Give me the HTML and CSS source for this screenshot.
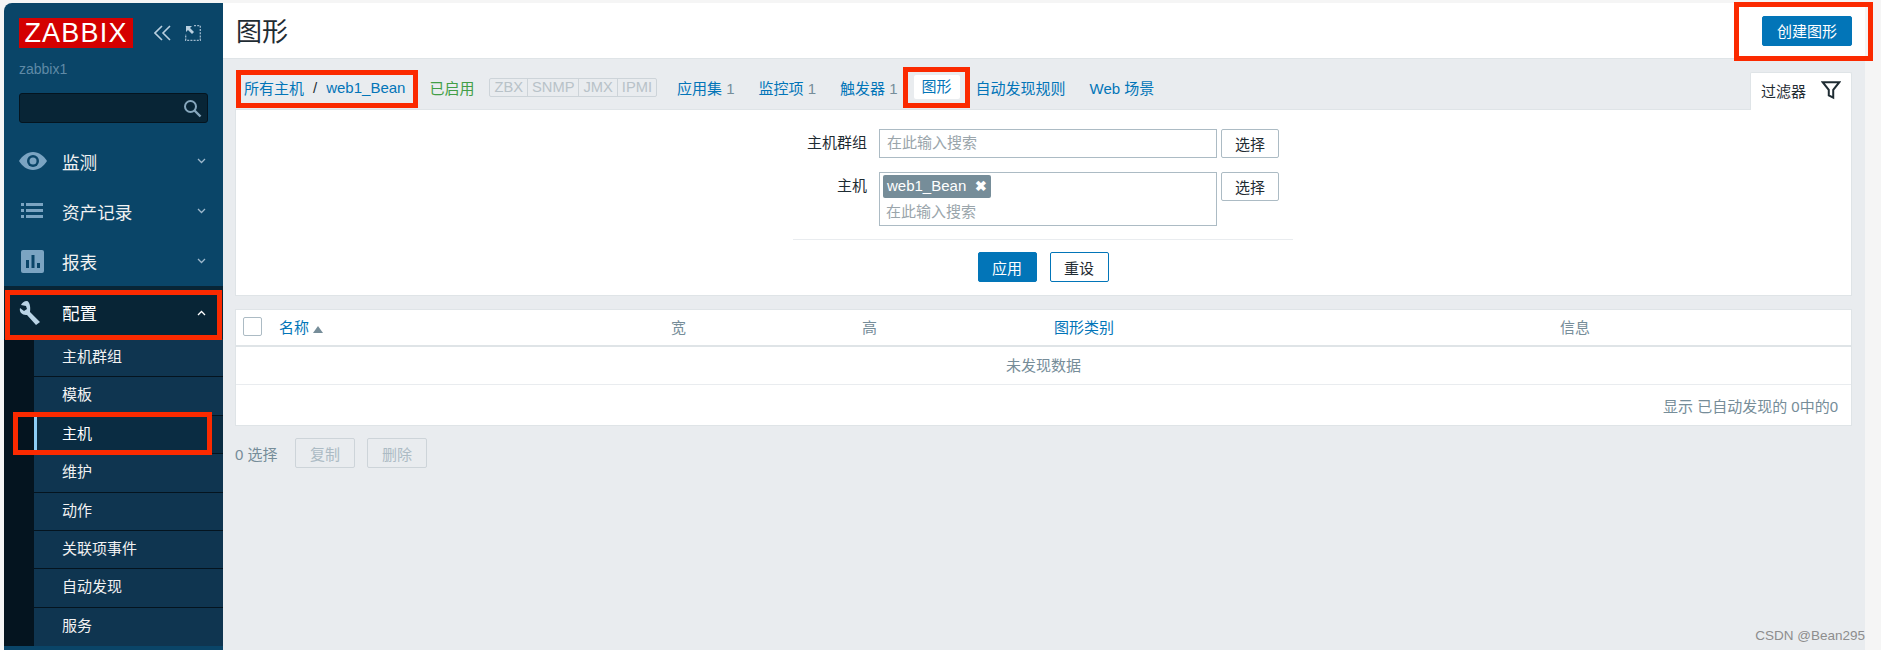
FILE: index.html
```html
<!DOCTYPE html>
<html lang="zh-CN">

<head>
  <meta charset="UTF-8" />
  <title>图形</title>
  <link rel="stylesheet" href="styles.css">
</head>

<body>
  <div class="page">

    <!-- left menu -->
    <aside class="sidebar">
      <div class="logo-row">
        <span class="logo">ZABBIX</span>
        <svg class="side-icon collapse-icon" width="18" height="16" viewBox="0 0 18 16">
          <path d="M8 1 1 8l7 7M16 1 9 8l7 7" fill="none" stroke="#b9cfdf" stroke-width="1.6" />
        </svg>
        <svg class="side-icon" width="16" height="16" viewBox="0 0 16 16">
          <path d="M9 .7h6.300V15.300H.7V9" fill="none" stroke="#9db8cc" stroke-width="1.300" stroke-dasharray="2 1.200" />
          <path d="M1 1h6L5 3l4 4-2 2-4-4-2 2z" fill="#b9cfdf" />
        </svg>
      </div>
      <div class="server-name">zabbix1</div>
      <div class="side-search">
        <svg width="19" height="19" viewBox="0 0 19 19">
          <circle cx="7.500" cy="7.500" r="5.500" fill="none" stroke="#86a7bd" stroke-width="2" />
          <path d="m11.500 11.500 6 6" stroke="#86a7bd" stroke-width="2.400" />
        </svg>
      </div>

      <nav class="menu">
        <a class="menu-item">
          <svg class="menu-icon" width="28" height="20" viewBox="0 0 28 20">
            <path d="M14 1C8 1 3 5 0 10c3 5 8 9 14 9s11-4 14-9c-3-5-8-9-14-9z" fill="#7ba4c2" />
            <circle cx="14" cy="10" r="6" fill="#0a4568" />
            <circle cx="14" cy="10" r="3.500" fill="#7ba4c2" />
          </svg>
          <span class="menu-text">监测</span>
          <svg class="chevron" width="9" height="6" viewBox="0 0 9 6"><path d="m1 1 3.500 3.500L8 1" fill="none" stroke="#9db8cc" stroke-width="1.300" /></svg>
        </a>
        <a class="menu-item">
          <svg class="menu-icon" width="28" height="16" viewBox="0 0 28 16">
            <path d="M2 0h3v3H2zM2 6h3v3H2zM2 12h3v3H2zM7 0h17v3H7zM7 6h17v3H7zM7 12h17v3H7z" fill="#7ba4c2" />
          </svg>
          <span class="menu-text">资产记录</span>
          <svg class="chevron" width="9" height="6" viewBox="0 0 9 6"><path d="m1 1 3.500 3.500L8 1" fill="none" stroke="#9db8cc" stroke-width="1.300" /></svg>
        </a>
        <a class="menu-item">
          <svg class="menu-icon" width="28" height="23" viewBox="0 0 28 23">
            <rect x="2" width="23" height="23" rx="2" fill="#7ba4c2" />
            <path d="M7 10h3v8H7zM12.500 5h3v13h-3zM18 13h3v5h-3z" fill="#0a4568" />
          </svg>
          <span class="menu-text">报表</span>
          <svg class="chevron" width="9" height="6" viewBox="0 0 9 6"><path d="m1 1 3.500 3.500L8 1" fill="none" stroke="#9db8cc" stroke-width="1.300" /></svg>
        </a>
        <a class="menu-item menu-open">
          <svg class="menu-icon" width="28" height="24" viewBox="0 0 28 24">
            <path d="M8 0c-3 0-5 2-6 4l5 1 1 3-3 2-4-3c-1 4 2 7 6 7h1l9 10 4-3-10-10c1-6-1-11-3-11z" fill="#b9d4e6" />
          </svg>
          <span class="menu-text">配置</span>
          <svg class="chevron" width="9" height="6" viewBox="0 0 9 6"><path d="m1 5 3.500-3.500L8 5" fill="none" stroke="#ffffff" stroke-width="1.300" /></svg>
        </a>
      </nav>

      <ul class="submenu">
        <li>主机群组</li>
        <li>模板</li>
        <li class="current">主机</li>
        <li>维护</li>
        <li>动作</li>
        <li>关联项事件</li>
        <li>自动发现</li>
        <li>服务</li>
      </ul>
    </aside>

    <main class="content">
      <header class="page-head">
        <h1>图形</h1>
        <button class="btn-primary btn-create">创建图形</button>
      </header>

      <div class="content-body">
        <section class="filter-panel">
          <div class="tabs-row">
            <a class="crumb">所有主机</a><span class="crumb-sep">/</span><a class="crumb">web1_Bean</a>
            <span class="status-on">已启用</span>
            <span class="avail"><i>ZBX</i><i>SNMP</i><i>JMX</i><i>IPMI</i></span>
            <a class="tab-link link-apps">应用集 <em>1</em></a>
            <a class="tab-link">监控项 <em>1</em></a>
            <a class="tab-link">触发器 <em>1</em></a>
            <a class="tab-link tab-active">图形</a>
            <a class="tab-link">自动发现规则</a>
            <a class="tab-link">Web 场景</a>
            <div class="filter-tab">
              过滤器
              <svg width="20" height="19" viewBox="0 0 18 17"><path d="M1.500 1h15l-5.500 7v7l-4-2V8z" fill="none" stroke="#1f2c33" stroke-width="1.800" /></svg>
            </div>
          </div>

          <form class="filter-form">
            <div class="form-row">
              <label>主机群组</label>
              <div class="search-box">在此输入搜索</div>
              <button type="button" class="btn-select">选择</button>
            </div>
            <div class="form-row">
              <label>主机</label>
              <div class="search-box search-multi">
                <span class="tag">web1_Bean <b>✖</b></span>
                <span>在此输入搜索</span>
              </div>
              <button type="button" class="btn-select">选择</button>
            </div>
            <div class="form-actions">
              <button type="button" class="btn-primary">应用</button>
              <button type="button" class="btn-outline">重设</button>
            </div>
          </form>
        </section>

        <section class="list-panel">
          <table class="list-table">
            <thead>
              <tr>
                <th class="col-check"><span class="checkbox"></span></th>
                <th class="col-name"><a>名称</a> <span class="sort-up"></span></th>
                <th class="col-w">宽</th>
                <th class="col-h">高</th>
                <th class="col-type"><a>图形类别</a></th>
                <th>信息</th>
              </tr>
            </thead>
            <tbody>
              <tr>
                <td colspan="6" class="no-data">未发现数据</td>
              </tr>
            </tbody>
          </table>
          <div class="table-foot">显示 已自动发现的 0中的0</div>
        </section>

        <div class="action-bar">
          <span class="selected-count">0 选择</span>
          <button class="btn-disabled">复制</button>
          <button class="btn-disabled">删除</button>
        </div>
      </div>

      <div class="watermark">CSDN @Bean295</div>
    </main>

    <div class="right-strip"></div>
  </div>

  <!-- red boxes drawn over the screenshot -->
  <div class="mark mark-crumb"></div>
  <div class="mark mark-tab"></div>
  <div class="mark mark-create"></div>
  <div class="mark mark-config"></div>
  <div class="mark mark-host"></div>
</body>

</html>
```

FILE: styles.css
```css
* {
  box-sizing: border-box;
}

html,
body {
  margin: 0;
  height: 650px;
  overflow: hidden;
}

body {
  background: #f5f5f5;
  font-family: "Liberation Sans", "Noto Sans CJK SC", sans-serif;
  font-size: 15px;
  color: #1f2c33;
  position: relative;
}

a {
  color: #0275b8;
}

.page {
  display: flex;
  height: 650px;
  padding: 3px 0 0 4px;
}

/* sidebar */
.sidebar {
  width: 219px;
  flex: none;
  background: #0a4568;
  border-top-left-radius: 8px;
  color: #f2f2f2;
  display: flex;
  flex-direction: column;
}

.logo-row {
  display: flex;
  align-items: center;
  padding: 15px 0 0 15px;
  height: 45px;
}

.logo {
  width: 114px;
  height: 30px;
  background: #d40000;
  color: #fff;
  font-size: 27px;
  line-height: 30px;
  text-align: center;
  letter-spacing: 1.200px;
}

.side-icon {
  flex: none;
}

.collapse-icon {
  margin: 0 13px 0 21px;
}

.server-name {
  margin: 13px 0 0 15px;
  height: 17px;
  font-size: 14px;
  line-height: 17px;
  color: #5f8aa6;
}

.side-search {
  margin: 15px 15px 0;
  height: 30px;
  background: #082536;
  border: 1px solid #04141f;
  border-radius: 3px;
  display: flex;
  align-items: center;
  justify-content: flex-end;
  padding-right: 5px;
}

.menu {
  margin-top: 13px;
}

.menu-item {
  display: flex;
  align-items: center;
  height: 50px;
  padding: 0 17px 0 15px;
  color: #f2f2f2;
}

.menu-icon {
  flex: none;
  margin-right: 15px;
}

.menu-text {
  flex: 1;
  font-size: 17.600px;
}

.menu-open {
  height: 53px;
  background: #082536;
  color: #fff;
}

.submenu {
  list-style: none;
  margin: 0;
  padding: 0 0 0 30px;
  background: #04141f;
  height: 307px;
}

.submenu li {
  height: 38.400px;
  line-height: 36px;
  padding-left: 28px;
  background: #0f3550;
  border-bottom: 1px solid #04141f;
}

.submenu li:last-child {
  border-bottom: 0;
}

.submenu .current {
  background: #0a2c42;
  color: #fff;
  border-left: 3px solid #8ccdf5;
  padding-left: 25px;
}

/* main column */
.content {
  flex: 1;
  background: #e9ecef;
  position: relative;
}

.page-head {
  height: 56px;
  background: #fff;
  border-bottom: 1px solid #dfe4e7;
  display: flex;
  align-items: center;
  justify-content: space-between;
  padding: 0 13px 2px 13px;
}

h1 {
  margin: 0;
  font-size: 26px;
  font-weight: normal;
  color: #1f2c33;
}

button {
  font-family: inherit;
  font-size: 15px;
  border-radius: 2px;
  height: 30px;
  padding: 0;
}

.btn-primary {
  width: 59px;
  background: #0275b8;
  border: 1px solid #0275b8;
  color: #fff;
}

.btn-create {
  width: 90px;
  margin-top: 2px;
}

.content-body {
  padding: 11px 13px 0 12px;
}

.filter-panel {
  background: #fff;
  border-bottom: 1px solid #dfe4e7;
  border-left: 1px solid #dfe4e7;
  border-right: 1px solid #dfe4e7;
  height: 226px;
}

.tabs-row {
  height: 40px;
  margin: 0 -1px;
  background: #e9ecef;
  border-bottom: 1px solid #dfe4e7;
  display: flex;
  align-items: center;
  padding: 0 0 5px 9px;
  position: relative;
  white-space: nowrap;
}

.crumb-sep {
  margin: 0 9px;
  color: #1f2c33;
}

.status-on {
  color: #429e47;
  margin-left: 24px;
}

.avail {
  display: flex;
  margin-left: 15px;
  border: 1px solid #cdd4d9;
  border-radius: 2px;
  height: 19px;
  line-height: 17px;
  font-size: 14.700px;
  color: #b8c2c8;
}

.avail i {
  font-style: normal;
  padding: 0 4px;
  border-right: 1px solid #cdd4d9;
}

.avail i:last-child {
  border-right: 0;
}

.tab-link {
  margin-right: 24px;
}

.tab-link em {
  font-style: normal;
  color: #768d99;
}

.link-apps {
  margin-left: 20px;
}

.tab-active {
  background: #fff;
  height: 24px;
  line-height: 24px;
  width: 46px;
  text-align: center;
  margin: 0 16px 0 -8px;
  border-radius: 2px;
}

.filter-tab {
  position: absolute;
  right: 0;
  bottom: -1px;
  width: 102px;
  height: 38px;
  background: #fff;
  border: 1px solid #dfe4e7;
  border-bottom: 0;
  display: flex;
  align-items: center;
  justify-content: space-between;
  padding: 0 10px 3px 10px;
  border-top-left-radius: 2px;
  border-top-right-radius: 2px;
}

.filter-form {
  padding-top: 19px;
}

.form-row {
  display: flex;
  align-items: flex-start;
  margin-bottom: 14px;
  padding-left: 546px;
}

.form-row label {
  width: 85px;
  line-height: 27px;
  text-align: right;
  margin-right: 12px;
}

.search-box {
  width: 338px;
  height: 29px;
  border: 1px solid #acbbc4;
  padding-left: 7px;
  line-height: 26px;
  color: #9aa5ab;
  background: #fff;
}

.search-multi {
  height: 54px;
  padding: 2px 0 0 3px;
  display: flex;
  flex-direction: column;
  align-items: flex-start;
  line-height: 22px;
}

.search-multi span:last-child {
  padding-left: 3px;
  margin-top: 4px;
  line-height: 20px;
}

.tag {
  background: #768d99;
  color: #fff;
  border-radius: 2px;
  height: 23px;
  line-height: 22px;
  padding: 0 4px;
}

.tag b {
  margin-left: 5px;
  font-size: 14px;
}

.btn-select {
  width: 58px;
  height: 29px;
  margin-left: 4px;
  background: #fff;
  border: 1px solid #acbbc4;
  color: #1f2c33;
}

.form-actions {
  width: 500px;
  margin: -1px 0 0 557px;
  padding-top: 12px;
  border-top: 1px solid #e9ecef;
  display: flex;
  justify-content: center;
  gap: 13px;
}

.btn-outline {
  width: 59px;
  background: #fff;
  border: 1px solid #0275b8;
  color: #0275b8;
}

.form-actions .btn-outline {
  color: #1f2c33;
}

/* graph list */
.list-panel {
  margin-top: 13px;
  background: #fff;
  border: 1px solid #dfe4e7;
  height: 117px;
}

.list-table {
  width: 100%;
  border-collapse: collapse;
  table-layout: fixed;
}

.list-table th {
  height: 36px;
  padding: 0 0 2px;
  text-align: left;
  font-weight: normal;
  color: #768d99;
  border-bottom: 2px solid #dfe4e7;
}

.col-check {
  width: 43px;
  padding-left: 7px !important;
}

.col-name {
  width: 392px;
}

.col-w {
  width: 191px;
}

.col-h {
  width: 192px;
}

.col-type {
  width: 506px;
}

.checkbox {
  display: block;
  width: 19px;
  height: 19px;
  border: 1px solid #acbbc4;
  border-radius: 2px;
}

.sort-up {
  display: inline-block;
  width: 0;
  height: 0;
  border-left: 5px solid transparent;
  border-right: 5px solid transparent;
  border-bottom: 7px solid #768d99;
}

.no-data {
  height: 38px;
  padding: 0 0 2px;
  text-align: center;
  color: #768d99;
  border-bottom: 1px solid #e9ecef;
}

.table-foot {
  text-align: right;
  padding: 10px 13px 0 0;
  color: #768d99;
}

.action-bar {
  display: flex;
  align-items: center;
  margin-top: 12px;
  color: #768d99;
}

.selected-count {
  width: 60px;
}

.btn-disabled {
  width: 60px;
  margin-right: 12px;
  background: #e9ecef;
  border: 1px solid #cdd4d9;
  color: #acbbc4;
}

.watermark {
  position: absolute;
  right: 0;
  bottom: 7px;
  font-size: 13.500px;
  color: #8d8d8d;
}

.right-strip {
  width: 16px;
  flex: none;
}

/* red annotation boxes */
.mark {
  position: absolute;
  border: 5px solid #fb2a00;
}

.mark-crumb {
  left: 236px;
  top: 70px;
  width: 182px;
  height: 38px;
}

.mark-tab {
  left: 903px;
  top: 67px;
  width: 67px;
  height: 41px;
}

.mark-create {
  left: 1734px;
  top: 2px;
  width: 139px;
  height: 59px;
}

.mark-config {
  left: 5px;
  top: 290px;
  width: 217px;
  height: 50px;
}

.mark-host {
  left: 13px;
  top: 412px;
  width: 199px;
  height: 43px;
}
```
